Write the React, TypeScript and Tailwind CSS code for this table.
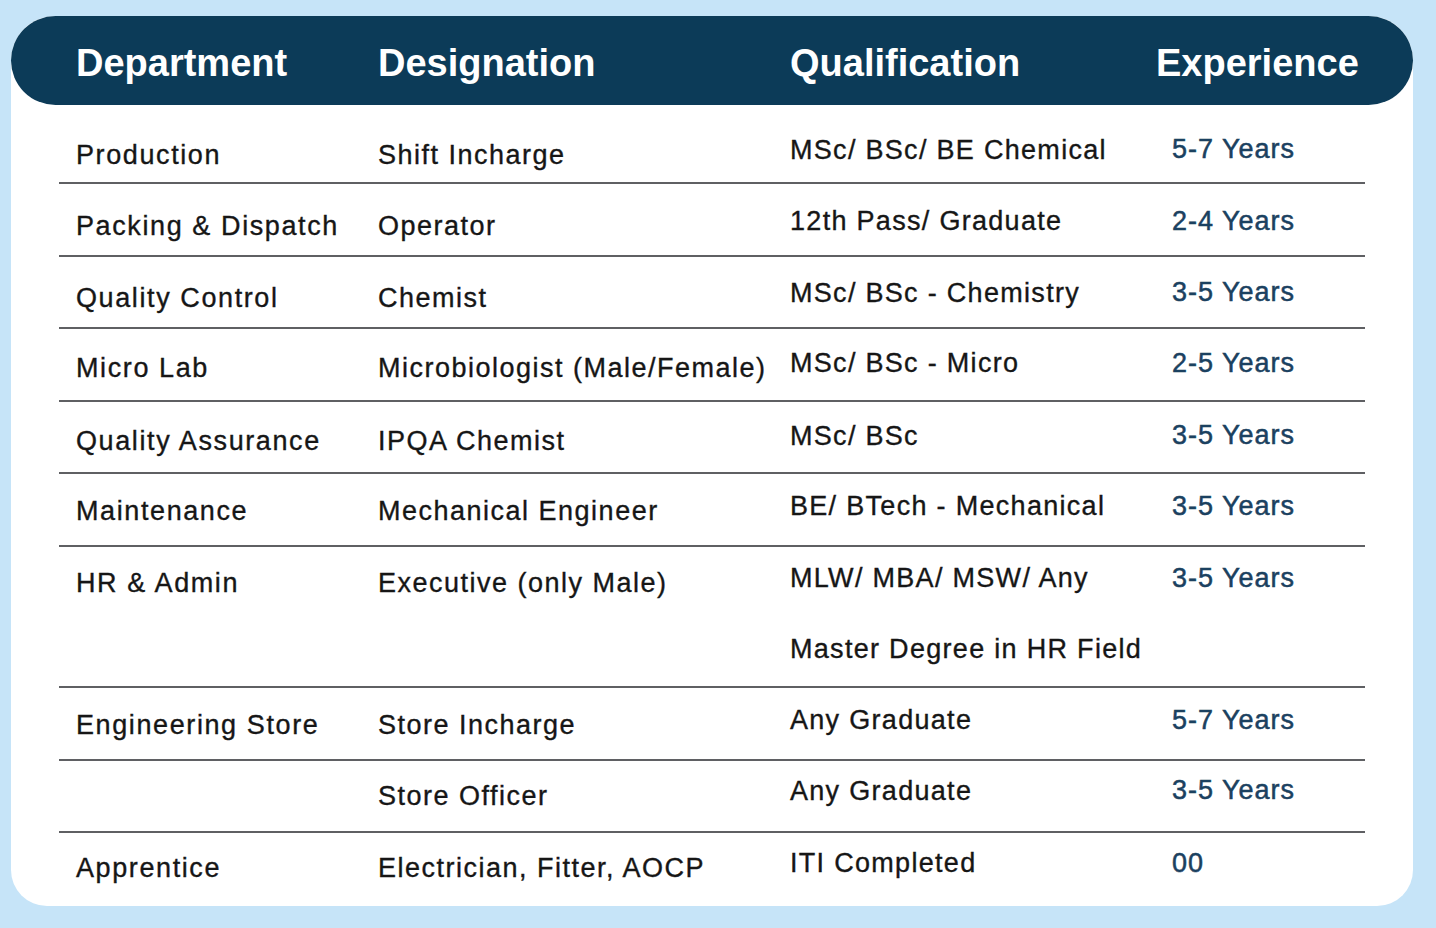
type Row = {
  dept: string;
  role: string;
  qual: string[];
  exp: string;
  pad: string;
  tall?: boolean;
};

const ROWS: Row[] = [
  { dept: 'Production', role: 'Shift Incharge', qual: ['MSc/ BSc/ BE Chemical'], exp: '5-7 Years', pad: 'pt-[27px]' },
  { dept: 'Packing & Dispatch', role: 'Operator', qual: ['12th Pass/ Graduate'], exp: '2-4 Years', pad: 'pt-[26px]' },
  { dept: 'Quality Control', role: 'Chemist', qual: ['MSc/ BSc - Chemistry'], exp: '3-5 Years', pad: 'pt-[25px]' },
  { dept: 'Micro Lab', role: 'Microbiologist (Male/Female)', qual: ['MSc/ BSc - Micro'], exp: '2-5 Years', pad: 'pt-[23px]' },
  { dept: 'Quality Assurance', role: 'IPQA Chemist', qual: ['MSc/ BSc'], exp: '3-5 Years', pad: 'pt-[23px]' },
  { dept: 'Maintenance', role: 'Mechanical Engineer', qual: ['BE/ BTech - Mechanical'], exp: '3-5 Years', pad: 'pt-[21px]' },
  {
    dept: 'HR & Admin',
    role: 'Executive (only Male)',
    qual: ['MLW/ MBA/ MSW/ Any', 'Master Degree in HR Field'],
    exp: '3-5 Years',
    pad: 'pt-[20px]',
    tall: true,
  },
  { dept: 'Engineering Store', role: 'Store Incharge', qual: ['Any Graduate'], exp: '5-7 Years', pad: 'pt-[21px]' },
  { dept: '', role: 'Store Officer', qual: ['Any Graduate'], exp: '3-5 Years', pad: 'pt-[19px]' },
  { dept: 'Apprentice', role: 'Electrician, Fitter, AOCP', qual: ['ITI Completed'], exp: '00', pad: 'pt-[19px]' },
];

const HEADERS = ['Department', 'Designation', 'Qualification', 'Experience'];

export default function App() {
  return (
    <div className="min-h-[928px] w-[1436px] bg-[#c6e4f8] pt-[16px] pb-[23px] font-['Liberation_Sans',Arial,sans-serif]">
      <div className="ml-[11px] w-[1402px] rounded-t-[44px] rounded-b-[36px] bg-white">
        {/* header bar */}
        <div className="grid h-[89px] grid-cols-[302px_412px_366px_1fr] items-center rounded-full bg-[#0c3b58] pl-[65px] pt-[4px] text-[38px] font-bold leading-[44px] text-white">
          {HEADERS.map((h) => (
            <div key={h} className="whitespace-nowrap">
              {h}
            </div>
          ))}
        </div>

        {/* rows */}
        <div className="px-[48px] pt-[6.5px]">
          {ROWS.map((r, i) => (
            <div
              key={i}
              className={`grid grid-cols-[302px_412px_366px_1fr] pl-[17px] text-[27px] leading-[32px] text-[#161616] [-webkit-text-stroke:0.35px] ${r.pad} ${
                r.tall ? 'h-[141px]' : 'h-[72.6px]'
              } ${i < ROWS.length - 1 ? 'border-b-2 border-[#5f6063]' : ''}`}
            >
              <div className="whitespace-nowrap tracking-[1.6px]">{r.dept}</div>
              <div className="whitespace-nowrap tracking-[1.5px]">{r.role}</div>
              <div className="-mt-[5px] flex flex-col gap-[38.5px] whitespace-nowrap tracking-[1.3px]">
                {r.qual.map((q) => (
                  <span key={q}>{q}</span>
                ))}
              </div>
              <div className="-mt-[5.5px] whitespace-nowrap pl-[16px] tracking-[1px] text-[#1b4160] [-webkit-text-stroke:0.5px]">
                {r.exp}
              </div>
            </div>
          ))}
        </div>
      </div>
    </div>
  );
}
